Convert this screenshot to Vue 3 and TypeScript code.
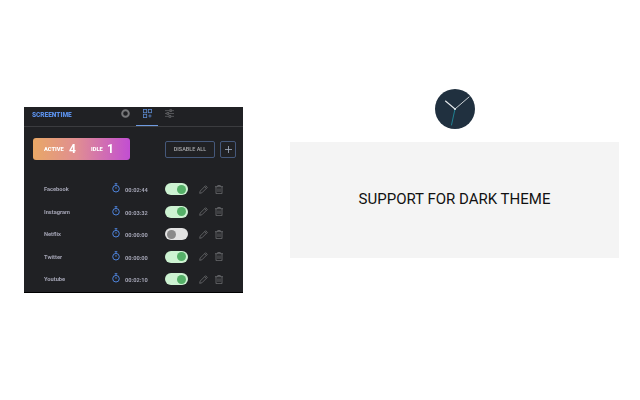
<script setup lang="ts">
interface Site {
  name: string
  time: string
  on: boolean
}

const sites: Site[] = [
  { name: 'Facebook', time: '00:02:44', on: true },
  { name: 'Instagram', time: '00:03:32', on: true },
  { name: 'Netflix', time: '00:00:00', on: false },
  { name: 'Twitter', time: '00:00:00', on: true },
  { name: 'Youtube', time: '00:02:10', on: true },
]
</script>

<template>
  <div class="page">
    <section class="panel">
      <header class="head">
        <span class="brand">SCREENTIME</span>
        <nav class="tabs">
          <span class="tab">
            <svg width="9" height="9" viewBox="0 0 9 9"><circle cx="4.5" cy="4.5" r="3.3" fill="none" stroke="#77787a" stroke-width="2" /></svg>
          </span>
          <span class="tab tab-on">
            <svg width="9" height="9" viewBox="0 0 11 11" fill="none" stroke="#5b86c9" stroke-width="1">
              <rect x="0.5" y="0.5" width="4" height="4" />
              <rect x="6.5" y="0.5" width="4" height="4" />
              <rect x="0.5" y="6.5" width="4" height="4" />
              <path d="M6.5 8.5h4M8.5 6.5v4" />
            </svg>
          </span>
          <span class="tab">
            <svg width="9" height="9" viewBox="0 0 11 11" fill="#202124" stroke="#5f6063" stroke-width="1">
              <path d="M0 2h11M0 5.5h11M0 9h11" />
              <rect x="6" y="0.8" width="2" height="2.4" />
              <rect x="2.5" y="4.3" width="2" height="2.4" />
              <rect x="5" y="7.8" width="2" height="2.4" />
            </svg>
          </span>
        </nav>
      </header>

      <div class="summary">
        <div class="counts">
          <span class="count-label">ACTIVE</span>
          <b class="count-num">4</b>
          <span class="count-label idle">IDLE</span>
          <b class="count-num">1</b>
        </div>
        <button class="disable">DISABLE ALL</button>
        <button class="add">
          <svg width="7" height="7" viewBox="0 0 9 9"><path d="M4.5 0v9M0 4.5h9" stroke="#a9b4c6" stroke-width="1" /></svg>
        </button>
      </div>

      <ul class="rows">
        <li v-for="site in sites" :key="site.name" class="row">
          <span class="name">{{ site.name }}</span>
          <svg class="watch" width="8" height="10" viewBox="0 0 9 11" fill="none" stroke="#4f86e0">
            <circle cx="4.5" cy="6.3" r="3.7" stroke-width="1.1" />
            <path d="M3 0.6h3M4.5 0.6v2M4.5 4.4v2" stroke-width="1" />
          </svg>
          <span class="time">{{ site.time }}</span>
          <span class="toggle" :class="{ off: !site.on }"><i class="knob"></i></span>
          <svg class="pencil" width="9" height="9" viewBox="0 0 9 9" fill="none" stroke="#6d6e71" stroke-width="0.8">
            <path d="M0.7 8.3l0.5-2.2L6.6 0.7l1.7 1.7L2.9 7.8z" />
            <path d="M5.6 1.7l1.7 1.7" />
          </svg>
          <svg class="trash" width="8" height="9" viewBox="0 0 8 9" fill="none" stroke="#6d6e71" stroke-width="0.8">
            <path d="M0 1.7h8M2.7 1.7V0.5h2.6v1.2" />
            <path d="M1 1.7v6.9h6V1.7M3 3.4v3.6M5 3.4v3.6" />
          </svg>
        </li>
      </ul>
    </section>

    <section class="feature">
      <svg class="clock" width="40" height="40" viewBox="0 0 40 40">
        <circle cx="20" cy="20" r="20" fill="#20303f" />
        <path d="M20 20L10.5 12" stroke="#e6e9ec" stroke-width="1.1" stroke-linecap="round" />
        <path d="M20 20L34 8" stroke="#dfe3e6" stroke-width="0.9" stroke-linecap="round" />
        <path d="M20 20L16.5 36" stroke="#1f8a9c" stroke-width="0.9" stroke-linecap="round" />
        <circle cx="20" cy="20" r="1" fill="#e6e9ec" />
      </svg>
      <div class="caption">SUPPORT FOR DARK THEME</div>
    </section>
  </div>
</template>

<style scoped>
.page {
  display: flex;
  align-items: flex-start;
  width: 640px;
  height: 400px;
  background: #fff;
  font-family: Roboto, "Liberation Sans", sans-serif;
  overflow: hidden;
}
.panel {
  box-sizing: border-box;
  width: 219px;
  height: 186px;
  margin: 107px 0 0 24px;
  background: #202124;
  box-shadow: inset 0 -1px 0 #000;
  filter: blur(0.3px);
}
.head {
  display: flex;
  align-items: flex-start;
  height: 19px;
  padding-left: 8px;
  border-bottom: 1px solid #3b3c3f;
}
.brand {
  margin-top: 4px;
  width: 82px;
  font-size: 6.5px;
  line-height: 8px;
  font-weight: 900;
  color: #5a8fe8;
}
.tabs {
  display: flex;
}
.tab {
  display: flex;
  justify-content: center;
  width: 22px;
  height: 19px;
}
.tab svg {
  margin-top: 1.5px;
}
.tab-on {
  box-shadow: inset 0 -1px 0 #6f9be0;
}
.summary {
  display: flex;
  align-items: center;
  height: 22px;
  margin-top: 11px;
  padding-left: 9px;
}
.counts {
  display: flex;
  align-items: center;
  box-sizing: border-box;
  width: 97px;
  height: 22px;
  padding-left: 11px;
  border-radius: 3px;
  background: linear-gradient(90deg, #e9a866 0%, #e08e92 45%, #c24ed2 100%);
  color: #fff;
}
.count-label {
  font-size: 5.7px;
  font-weight: 900;
  width: 25px;
}
.count-label.idle {
  width: 16px;
}
.count-num {
  font-size: 12px;
  font-weight: 700;
  width: 22px;
}
.disable,
.add {
  box-sizing: border-box;
  height: 17px;
  padding: 0;
  background: transparent;
  border: 1px solid #45587a;
  border-radius: 2px;
  color: #a9aaad;
  font-family: inherit;
}
.disable {
  width: 50px;
  margin-left: 35px;
  font-size: 5.5px;
  font-weight: 500;
}
.add {
  display: flex;
  align-items: center;
  justify-content: center;
  width: 16px;
  margin-left: 5px;
}
.rows {
  list-style: none;
  margin: 18px 0 0;
  padding: 0;
}
.row {
  display: flex;
  align-items: center;
  height: 22.5px;
  padding-left: 20px;
}
.name {
  width: 67.5px;
  font-size: 5.7px;
  font-weight: 700;
  color: #a3a4b4;
}
.watch {
  margin-top: -2px;
}
.time {
  width: 40px;
  margin-left: 5.5px;
  padding-top: 2px;
  font-size: 5.7px;
  font-weight: 700;
  color: #a3a4b4;
}
.toggle {
  display: flex;
  align-items: center;
  justify-content: flex-end;
  box-sizing: border-box;
  width: 23px;
  height: 12px;
  padding: 0 2px;
  border-radius: 6px;
  background: #cdf3d2;
}
.toggle.off {
  justify-content: flex-start;
  background: #e2e2e2;
}
.knob {
  width: 9px;
  height: 9px;
  border-radius: 50%;
  background: #55b068;
}
.off .knob {
  background: #8a8a8a;
}
.pencil {
  margin-left: 11px;
}
.trash {
  margin-left: 7px;
}
.feature {
  display: flex;
  flex-direction: column;
  align-items: center;
  width: 329px;
  margin: 89px 0 0 47px;
}
.clock {
  display: block;
}
.caption {
  box-sizing: border-box;
  display: flex;
  align-items: center;
  justify-content: center;
  width: 100%;
  height: 116px;
  margin-top: 13px;
  padding-bottom: 2px;
  background: #f4f4f4;
  color: #111;
  font-size: 15px;
}
</style>
